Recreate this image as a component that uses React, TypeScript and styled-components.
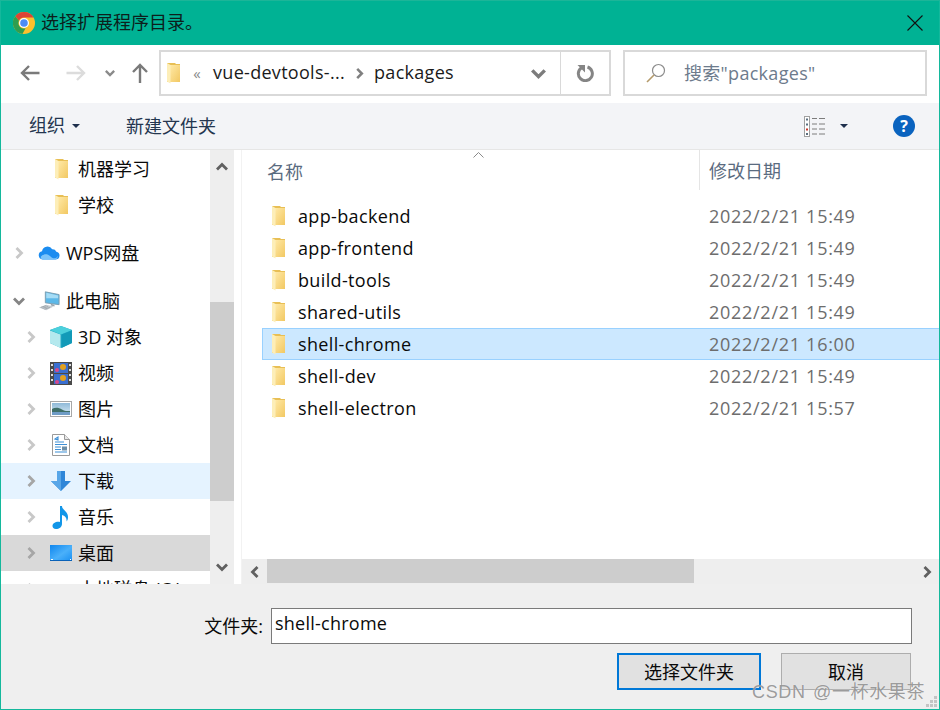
import React from 'react'
import styled, { createGlobalStyle } from 'styled-components'

const FONT = `"Open Sans", "Noto Sans CJK SC", sans-serif`

const GlobalStyle = createGlobalStyle`
  html, body {
    margin: 0;
    padding: 0;
    background: #fff;
  }
  body {
    font-family: ${FONT};
    font-size: 18px;
    color: #0a0a0a;
  }
`

const FolderIcon = () => (
  <svg width="15" height="22" viewBox="0 0 15 22">
    <defs>
      <linearGradient id="fold" x1="0" y1="0" x2="1" y2="1">
        <stop offset="0" stopColor="#ffe9a6" />
        <stop offset="1" stopColor="#f2c862" />
      </linearGradient>
    </defs>
    <path d="M1 1h8l1 1h4v18H1z" fill="#e8bf55" />
    <path d="M4 3h10v17H4z" fill="url(#fold)" />
    <path d="M1 1l3.500 2v18.500L1 19.500z" fill="#fdeeb8" />
  </svg>
)

const ChromeIcon = () => (
  <svg width="22" height="22" viewBox="0 0 22 22">
    <circle cx="11" cy="11" r="11" fill="#fbc02d" />
    <path d="M11 0a11 11 0 0 1 9.600 5.500H11a5.500 5.500 0 0 0-5 3.200L2.300 4.200A11 11 0 0 1 11 0z" fill="#db4437" />
    <path d="M2.300 4.200L6 8.700a5.500 5.500 0 0 0 6.600 7.600L9.400 21.900A11 11 0 0 1 2.300 4.200z" fill="#2f9e4f" />
    <circle cx="11" cy="11" r="5" fill="#fff" />
    <circle cx="11" cy="11" r="3.800" fill="#4d8cf5" />
  </svg>
)

const CloudIcon = () => (
  <svg width="24" height="18" viewBox="0 0 24 18">
    <path d="M5 16a4.500 4.500 0 0 1-.6-8.900A6 6 0 0 1 15.500 5a4.500 4.500 0 0 1 4.500 2.500A4.300 4.300 0 0 1 19.500 16z" fill="#1b8cf0" />
    <path d="M3 13c4-4 8-3 11 0s6 2 8-1c-1 3-2 4-3 4H5c-1 0-2-1-2-3z" fill="#7cc4fa" />
  </svg>
)

const ComputerIcon = () => (
  <svg width="24" height="22" viewBox="0 0 24 22">
    <path d="M8 1l15 3v11L8 13z" fill="#5cb8e8" stroke="#7d9bad" />
    <path d="M9 2l13 3v3L9 8z" fill="#a6dcf5" />
    <path d="M14 14l4 1v2l-4-1z" fill="#9aa5ad" />
    <path d="M1 18l8-3 8 2-8 4z" fill="#c5cbd0" />
    <path d="M3 18l6-2M5 19l6-2M7 20l6-2" stroke="#8d969c" strokeWidth=".7" />
  </svg>
)

const CubeIcon = () => (
  <svg width="22" height="22" viewBox="0 0 22 22">
    <path d="M11 0l11 4v13l-11 5L0 17V4z" fill="#22a9c4" />
    <path d="M0 4.500l10.500 4V22L0 17z" fill="#b4e9ee" />
    <path d="M11 0l11 4-11 4.500L0 4z" fill="#4cd0dc" />
    <path d="M11.500 8.500l10.500-4V17l-10.500 5z" fill="#129ab8" />
  </svg>
)

const FilmIcon = () => (
  <svg width="22" height="23" viewBox="0 0 22 23">
    <rect width="22" height="23" fill="#4a4a4a" />
    <rect x="4" y="1" width="14" height="10" fill="#3a6fd0" />
    <rect x="4" y="12" width="14" height="10" fill="#3a6fd0" />
    <circle cx="13" cy="5" r="3" fill="#e2a01f" />
    <circle cx="7" cy="8" r="2" fill="#d9488c" />
    <circle cx="13" cy="16" r="3" fill="#e2a01f" />
    <circle cx="7" cy="20" r="2" fill="#d9488c" />
    <path d="M1 2h2v2H1zM1 7h2v2H1zM1 12h2v2H1zM1 17h2v2H1zM19 2h2v2h-2zM19 7h2v2h-2zM19 12h2v2h-2zM19 17h2v2h-2z" fill="#ddd" />
  </svg>
)

const PictureIcon = () => (
  <svg width="22" height="16" viewBox="0 0 22 16">
    <defs>
      <linearGradient id="sky" x1="0" y1="0" x2="0" y2="1">
        <stop offset="0" stopColor="#8fb9d8" />
        <stop offset="1" stopColor="#d9ecf6" />
      </linearGradient>
    </defs>
    <rect x=".5" y=".5" width="21" height="15" fill="#fff" stroke="#a8a8a8" />
    <rect x="2" y="2" width="18" height="12" fill="url(#sky)" />
    <path d="M2 8c3-2 7-1.500 10 .5s5 1.500 8 1.500v4H2z" fill="#3f6f68" />
    <path d="M2 11h18v3H2z" fill="#6f9cc6" />
  </svg>
)

const DocIcon = () => (
  <svg width="18" height="22" viewBox="0 0 18 22">
    <path d="M.5.500h12l5 5v16H.5z" fill="#fff" stroke="#9a9a9a" />
    <path d="M12.500.500v5h5" fill="#e8e8e8" stroke="#9a9a9a" />
    <path d="M3 5l3-2v3zM3 8h9M3 10.500h12M3 13h6M3 15.500h6M3 18h12" stroke="#3d8fd6" strokeWidth="1.100" fill="none" />
    <rect x="10" y="12.500" width="5" height="4" fill="#6b8ea8" />
  </svg>
)

const DownloadIcon = () => (
  <svg width="20" height="20" viewBox="0 0 20 20">
    <path d="M6 0h8v10h6L10 20 0 10h6z" fill="#2f86d8" />
    <path d="M6 0h4v20L0 10h6z" fill="#58a6e8" />
  </svg>
)

const MusicIcon = () => (
  <svg width="18" height="23" viewBox="0 0 18 23">
    <path d="M8 0h2c0 4 6 5 6 11 0 2-.6 3.500-1.500 4.500 .5-3-1-6-4.500-6.500v9c0 3-3 5-6 5-2.500 0-3.500-1.500-3.500-3 0-3 4-5 7.500-4z" fill="#1296e8" />
  </svg>
)

const DesktopIcon = () => (
  <svg width="22" height="16" viewBox="0 0 22 16">
    <defs>
      <linearGradient id="desk" x1="0" y1="0" x2="1" y2="1">
        <stop offset="0" stopColor="#0f86ee" />
        <stop offset=".55" stopColor="#4ab0fa" />
        <stop offset="1" stopColor="#1a90f2" />
      </linearGradient>
    </defs>
    <rect width="22" height="16" fill="url(#desk)" />
    <path d="M1 14.500h20" stroke="#fff" strokeDasharray="2 17" />
    <path d="M0 15.500h22" stroke="#0a62b8" />
  </svg>
)

const DriveIcon = () => (
  <svg width="22" height="14" viewBox="0 0 22 14">
    <path d="M5 2h12l4 8H1z" fill="#8fc5e8" />
  </svg>
)

const Chevron = ({ color, dir = 'right', size = 12 }: { color: string; dir?: 'right' | 'down' | 'up' | 'left'; size?: number }) => {
  const points = { right: '3.500,1 8.500,6 3.500,11', left: '8.500,1 3.500,6 8.500,11', down: '1,3.500 6,8.500 11,3.500', up: '1,8.500 6,3.500 11,8.500' }
  return (
    <svg width={size} height={size} viewBox="0 0 12 12">
      <polyline points={points[dir]} fill="none" stroke={color} strokeWidth="2.800" />
    </svg>
  )
}

const Caret = () => (
  <svg width="8" height="4" viewBox="0 0 8 4">
    <path d="M0 0h8L4 4z" fill="#1e2f4d" />
  </svg>
)

const sideItems = [
  { key: 'ml', label: '机器学习', level: 1, icon: <FolderIcon />, noExpander: true },
  { key: 'school', label: '学校', level: 1, icon: <FolderIcon />, noExpander: true },
  { key: 'wps', label: 'WPS网盘', level: 0, icon: <CloudIcon />, groupStart: true },
  { key: 'pc', label: '此电脑', level: 0, icon: <ComputerIcon />, groupStart: true, open: true },
  { key: '3d', label: '3D 对象', level: 1, icon: <CubeIcon /> },
  { key: 'video', label: '视频', level: 1, icon: <FilmIcon /> },
  { key: 'pic', label: '图片', level: 1, icon: <PictureIcon /> },
  { key: 'doc', label: '文档', level: 1, icon: <DocIcon /> },
  { key: 'down', label: '下载', level: 1, icon: <DownloadIcon />, state: 'hover' },
  { key: 'music', label: '音乐', level: 1, icon: <MusicIcon /> },
  { key: 'desk', label: '桌面', level: 1, icon: <DesktopIcon />, state: 'active' },
  { key: 'c', label: '本地磁盘 (C:)', level: 1, icon: <DriveIcon /> }
]

const files = [
  { name: 'app-backend', date: '2022/2/21 15:49' },
  { name: 'app-frontend', date: '2022/2/21 15:49' },
  { name: 'build-tools', date: '2022/2/21 15:49' },
  { name: 'shared-utils', date: '2022/2/21 15:49' },
  { name: 'shell-chrome', date: '2022/2/21 16:00', selected: true },
  { name: 'shell-dev', date: '2022/2/21 15:49' },
  { name: 'shell-electron', date: '2022/2/21 15:57' }
]

const App: React.FC = () => {
  return (
    <Dialog>
      <GlobalStyle />
      <TitleBar>
        <TitleIcon>
          <ChromeIcon />
        </TitleIcon>
        <TitleText>选择扩展程序目录。</TitleText>
        <CloseGlyph width="16" height="16" viewBox="0 0 16 16">
          <path d="M.5.500l15 15M15.500.500l-15 15" stroke="#111" strokeWidth="1.100" />
        </CloseGlyph>
      </TitleBar>

      <NavBar>
        <NavButtons>
          <svg width="20" height="16" viewBox="0 0 20 16">
            <path d="M19.500 8H2M9 1L2 8l7 7" fill="none" stroke="#7a7a7a" strokeWidth="2.400" />
          </svg>
          <ForwardSlot>
            <svg width="20" height="16" viewBox="0 0 20 16">
              <path d="M.5 8H18M11 1l7 7-7 7" fill="none" stroke="#dcdcdc" strokeWidth="2.400" />
            </svg>
          </ForwardSlot>
          <HistorySlot>
            <Chevron color="#8a8a8a" dir="down" size={10} />
          </HistorySlot>
          <UpSlot>
            <svg width="16" height="20" viewBox="0 0 16 20">
              <path d="M8 20V2M1 9l7-7 7 7" fill="none" stroke="#7a7a7a" strokeWidth="2.400" />
            </svg>
          </UpSlot>
        </NavButtons>

        <AddressBox>
          <AddressMain>
            <FolderIcon />
            <Overflow>«</Overflow>
            <Crumb>vue-devtools-...</Crumb>
            <CrumbArrow>
              <Chevron color="#808080" size={11} />
            </CrumbArrow>
            <Crumb>packages</Crumb>
            <AddressChevron>
              <Chevron color="#7c7c7c" dir="down" size={15} />
            </AddressChevron>
          </AddressMain>
          <RefreshButton>
            <svg width="18" height="18" viewBox="0 0 18 18">
              <path d="M5.500 3.800A7 7 0 1 0 11.500 3" fill="none" stroke="#858585" strokeWidth="3" />
              <path d="M1.500 1h7.500v7.500z" fill="#858585" />
            </svg>
          </RefreshButton>
        </AddressBox>

        <SearchBox>
          <svg width="20" height="20" viewBox="0 0 20 20">
            <circle cx="12.500" cy="7.500" r="6" fill="none" stroke="#8c8c8c" strokeWidth="1.200" />
            <path d="M8 12l-7 7" stroke="#b49a6b" strokeWidth="1.600" />
          </svg>
          <SearchText>搜索"packages"</SearchText>
        </SearchBox>
      </NavBar>

      <ToolBar>
        <ToolText>组织</ToolText>
        <OrganizeCaret>
          <Caret />
        </OrganizeCaret>
        <NewFolder>新建文件夹</NewFolder>
        <ViewIcon width="22" height="21" viewBox="0 0 22 21">
          <rect x=".5" y=".5" width="5" height="20" fill="#fff" stroke="#a0a0a0" />
          <path d="M2 2.500h2v2H2zM2 7.500h2v2H2zM2 17h2v2H2z" fill="#5b6f80" />
          <path d="M2 12.500h2v2H2z" fill="#c8352b" />
          <path d="M8 2.500h5M15 2.500h6M8 8h5M15 8h6M8 13h5M15 13h6M8 18h5M15 18h6" stroke="#7c7c7c" />
        </ViewIcon>
        <ViewCaret>
          <Caret />
        </ViewCaret>
        <HelpBadge>?</HelpBadge>
      </ToolBar>

      <Main>
        <Sidebar>
          {sideItems.map(item => (
            <SideRow key={item.key} $level={item.level} $state={item.state} $groupStart={item.groupStart}>
              <Expander>
                {!item.noExpander && (
                  <Chevron
                    color={item.open ? '#858585' : item.state ? '#a6a6a6' : '#c8c8c8'}
                    dir={item.open ? 'down' : 'right'}
                  />
                )}
              </Expander>
              <SideIcon>{item.icon}</SideIcon>
              <SideLabel>{item.label}</SideLabel>
            </SideRow>
          ))}
        </Sidebar>

        <VScroll>
          <ScrollEnd>
            <Chevron color="#606060" dir="up" />
          </ScrollEnd>
          <VTrack>
            <VThumb />
          </VTrack>
          <ScrollEnd>
            <Chevron color="#606060" dir="down" />
          </ScrollEnd>
        </VScroll>

        <FilePane>
          <ListHeader>
            <SortArrow width="11" height="6" viewBox="0 0 11 6">
              <path d="M.5 5.500l5-5 5 5" fill="none" stroke="#8a8a8a" />
            </SortArrow>
            <NameColumn>名称</NameColumn>
            <DateColumn>修改日期</DateColumn>
          </ListHeader>

          <FileList>
            {files.map(file => (
              <FileRow key={file.name} $selected={file.selected}>
                <FileName>
                  <FolderIcon />
                  <span>{file.name}</span>
                </FileName>
                <FileDate>{file.date}</FileDate>
              </FileRow>
            ))}
          </FileList>

          <HScroll>
            <HEnd>
              <Chevron color="#606060" dir="left" />
            </HEnd>
            <HTrack>
              <HThumb />
            </HTrack>
            <HEnd>
              <Chevron color="#606060" />
            </HEnd>
          </HScroll>
        </FilePane>
      </Main>

      <Footer>
        <FieldRow>
          <FieldLabel>文件夹:</FieldLabel>
          <FieldInput>shell-chrome</FieldInput>
        </FieldRow>
        <ButtonRow>
          <ActionButton $primary>选择文件夹</ActionButton>
          <ActionButton>取消</ActionButton>
        </ButtonRow>
      </Footer>

      <Watermark>CSDN @一杯水果茶</Watermark>
      <Grip width="12" height="12" viewBox="0 0 12 12">
        <path d="M8 0h3v3H8zM4 4h3v3H4zM8 4h3v3H8zM0 8h3v3H0zM4 8h3v3H4zM8 8h3v3H8z" fill="#c4c4c4" />
      </Grip>
    </Dialog>
  )
}

export default App

const Dialog = styled.div`
  position: relative;
  box-sizing: border-box;
  width: 940px;
  height: 710px;
  border: 1px solid #14b89c;
  border-top-color: #1cb598;
  display: flex;
  flex-direction: column;
  overflow: hidden;
  background: #fff;
`

const TitleBar = styled.div`
  flex: 0 0 44px;
  background: #00b294;
  display: flex;
  align-items: center;
  padding: 0 16px 0 12px;
`

const TitleIcon = styled.span`
  display: flex;
  margin-right: 6px;
`

const TitleText = styled.span`
  color: #0c1f1c;
  line-height: 24px;
  padding-bottom: 2px;
`

const CloseGlyph = styled.svg`
  margin-left: auto;
`

const NavBar = styled.div`
  flex: 0 0 58px;
  display: flex;
  align-items: flex-start;
  padding-top: 5px;
  box-sizing: border-box;
`

const NavButtons = styled.div`
  width: 158px;
  height: 46px;
  padding-left: 19px;
  box-sizing: border-box;
  display: flex;
  align-items: center;
`

const ForwardSlot = styled.span`
  display: flex;
  margin-left: 26px;
`

const HistorySlot = styled.span`
  display: flex;
  margin-left: 19px;
`

const UpSlot = styled.span`
  display: flex;
  margin-left: 17px;
`

const AddressBox = styled.div`
  width: 452px;
  height: 46px;
  box-sizing: border-box;
  border: 2px solid #d9d9d9;
  display: flex;
  margin-right: 12px;
`

const AddressMain = styled.div`
  flex: 1;
  display: flex;
  align-items: center;
  padding-left: 5px;
  color: #1a1a1a;
  letter-spacing: 0.3px;
  border-right: 1px solid #d9d9d9;
`

const Crumb = styled.span`
  padding-bottom: 2px;
`

const Overflow = styled.span`
  width: 32px;
  text-align: center;
  color: #8a8a8a;
  font-size: 15px;
`

const CrumbArrow = styled.span`
  display: flex;
  width: 29px;
  justify-content: center;
`

const AddressChevron = styled.span`
  display: flex;
  margin-left: auto;
  margin-right: 14px;
`

const RefreshButton = styled.div`
  flex: 0 0 48px;
  display: flex;
  align-items: center;
  justify-content: center;
`

const SearchBox = styled.div`
  width: 304px;
  height: 46px;
  box-sizing: border-box;
  border: 2px solid #d9d9d9;
  display: flex;
  align-items: center;
  padding-left: 21px;
  gap: 18px;
`

const SearchText = styled.span`
  color: #6d7b8c;
  letter-spacing: 0.3px;
  padding-bottom: 2px;
`

const ToolBar = styled.div`
  flex: 0 0 47px;
  box-sizing: border-box;
  background: #f3f4f7;
  border-bottom: 1px solid #e6e6e6;
  display: flex;
  align-items: center;
  padding-left: 28px;
  color: #24364f;
`

const ToolText = styled.span`
  line-height: 24px;
  padding-bottom: 2px;
`

const OrganizeCaret = styled.span`
  display: flex;
  margin-left: 7px;
`

const NewFolder = styled.span`
  margin-left: 46px;
  padding-bottom: 2px;
`

const ViewIcon = styled.svg`
  margin-left: auto;
`

const ViewCaret = styled.span`
  display: flex;
  margin-left: 14px;
`

const HelpBadge = styled.span`
  width: 22px;
  height: 22px;
  border-radius: 50%;
  background: #0a63bf;
  color: #fff;
  font-size: 16px;
  font-weight: 700;
  display: flex;
  align-items: center;
  justify-content: center;
  margin-left: 45px;
  margin-right: 24px;
`

const Main = styled.div`
  flex: 0 0 434px;
  min-height: 0;
  display: flex;
`

const Sidebar = styled.div`
  width: 209px;
  overflow: hidden;
  padding-top: 1px;
`

const SideRow = styled.div<{ $level: number; $state?: string; $groupStart?: boolean }>`
  height: 36px;
  flex: none;
  display: flex;
  align-items: center;
  padding-left: ${p => (p.$level ? 23 : 11)}px;
  margin-top: ${p => (p.$groupStart ? 12 : 0)}px;
  background: ${p => (p.$state === 'hover' ? '#e5f3ff' : p.$state === 'active' ? '#d9d9d9' : 'transparent')};
`

const Expander = styled.span`
  width: 14px;
  margin-right: 12px;
  display: flex;
  justify-content: center;
`

const SideIcon = styled.span`
  width: 22px;
  margin-right: 6px;
  display: flex;
  justify-content: center;
  align-items: center;
`

const SideLabel = styled.span`
  padding-bottom: 2px;
`

const VScroll = styled.div`
  width: 24px;
  background: #eeeeee;
  display: flex;
  flex-direction: column;
`

const ScrollEnd = styled.div`
  flex: 0 0 34px;
  display: flex;
  align-items: center;
  justify-content: center;
`

const VTrack = styled.div`
  flex: 1;
  padding-top: 118px;
`

const VThumb = styled.div`
  height: 199px;
  background: #cdcdcd;
`

const FilePane = styled.div`
  flex: 1;
  min-width: 0;
  margin-left: 7px;
  border-left: 1px solid #f2f2f2;
  display: flex;
  flex-direction: column;
`

const ListHeader = styled.div`
  position: relative;
  flex: 0 0 42px;
  display: flex;
  align-items: center;
  color: #5a6b80;
`

const SortArrow = styled.svg`
  position: absolute;
  left: 231px;
  top: 2px;
`

const NameColumn = styled.span`
  width: 457px;
  padding-left: 25px;
  box-sizing: border-box;
`

const DateColumn = styled.span`
  height: 40px;
  line-height: 42px;
  padding-left: 9px;
  border-left: 1px solid #e5e5e5;
  margin-top: -2px;
`

const FileList = styled.div`
  flex: 1;
  padding-top: 8px;
  padding-left: 20px;
`

const FileRow = styled.div<{ $selected?: boolean }>`
  height: 32px;
  box-sizing: border-box;
  display: flex;
  align-items: center;
  border: 1px solid ${p => (p.$selected ? '#99d1ff' : 'transparent')};
  border-right: none;
  background: ${p => (p.$selected ? '#cce8ff' : 'transparent')};
`

const FileName = styled.div`
  width: 446px;
  padding-left: 8px;
  box-sizing: border-box;
  display: flex;
  align-items: center;
  gap: 12px;
  color: #0a0a0a;
  letter-spacing: 0.35px;
`

const FileDate = styled.span`
  color: #6d6d6d;
  letter-spacing: 0.72px;
`

const HScroll = styled.div`
  flex: 0 0 25px;
  background: #eeeeee;
  display: flex;
`

const HEnd = styled.div`
  flex: 0 0 25px;
  display: flex;
  align-items: center;
  justify-content: center;
`

const HTrack = styled.div`
  flex: 1;
`

const HThumb = styled.div`
  width: 427px;
  height: 24px;
  background: #cdcdcd;
`

const Footer = styled.div`
  flex: 1;
  background: #efefef;
  padding-top: 24px;
`

const FieldRow = styled.div`
  display: flex;
  align-items: center;
  justify-content: flex-end;
  padding-right: 27px;
`

const FieldLabel = styled.span`
  margin-right: 8px;
  padding-bottom: 2px;
`

const FieldInput = styled.div`
  width: 641px;
  height: 36px;
  box-sizing: border-box;
  background: #fff;
  border: 1px solid #7a7a7a;
  padding-left: 3px;
  line-height: 28px;
  letter-spacing: 0.25px;
`

const ButtonRow = styled.div`
  display: flex;
  justify-content: flex-end;
  gap: 20px;
  margin-top: 9px;
  padding-right: 28px;
`

const ActionButton = styled.div<{ $primary?: boolean }>`
  width: ${p => (p.$primary ? 144 : 130)}px;
  height: 37px;
  box-sizing: border-box;
  background: #e1e1e1;
  border: ${p => (p.$primary ? '2px solid #0078d7' : '1px solid #adadad')};
  padding-bottom: 2px;
  display: flex;
  align-items: center;
  justify-content: center;
`

const Watermark = styled.span`
  position: absolute;
  right: 14px;
  bottom: 5px;
  font-family: "Liberation Sans", "Noto Sans CJK SC", sans-serif;
  font-size: 18px;
  line-height: 24px;
  letter-spacing: 0.6px;
  word-spacing: 2px;
  color: rgba(130, 130, 130, 0.8);
  text-shadow: 0 0 1px rgba(255, 255, 255, 0.8);
`

const Grip = styled.svg`
  position: absolute;
  right: 1px;
  bottom: 1px;
`
